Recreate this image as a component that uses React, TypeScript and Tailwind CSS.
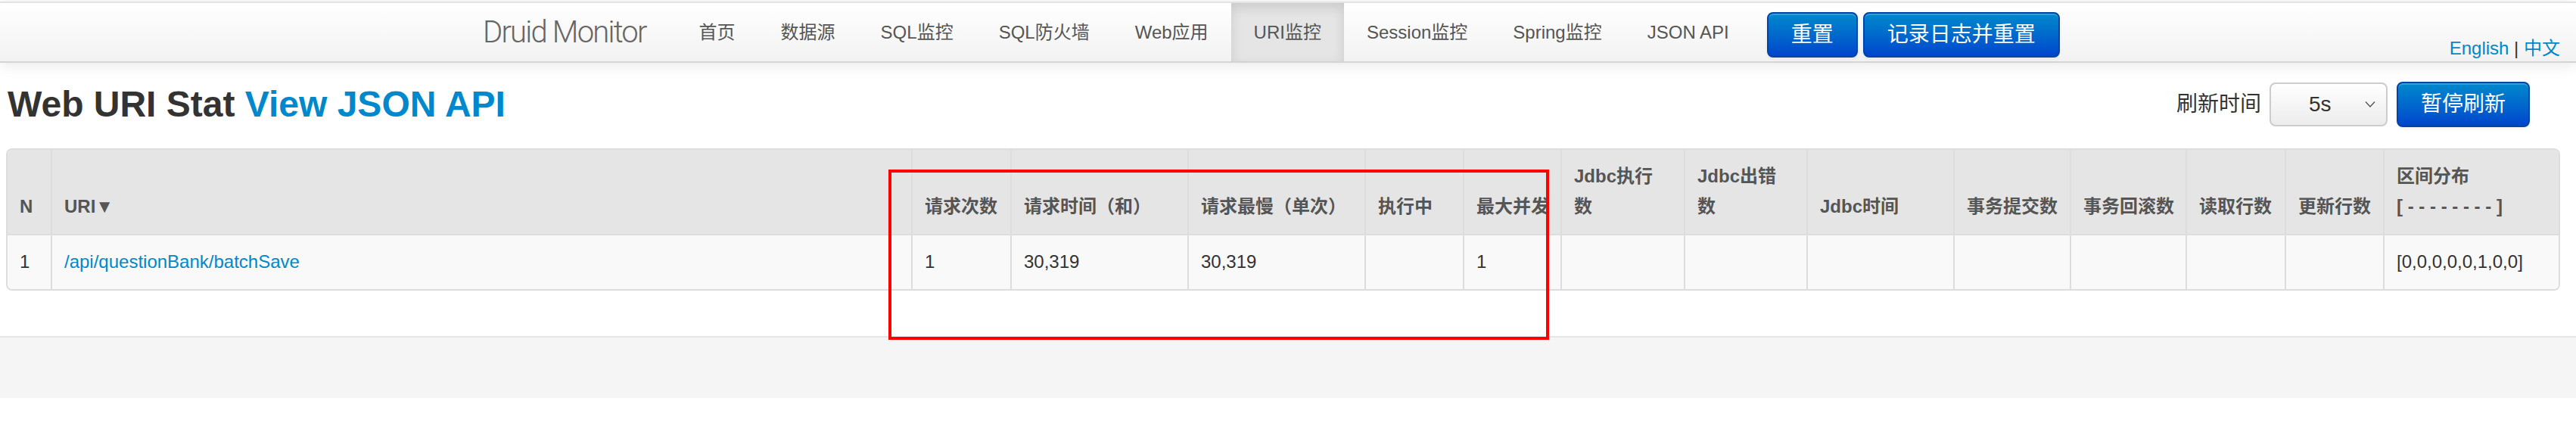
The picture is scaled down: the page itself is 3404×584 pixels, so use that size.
import React from 'react';

const FONT = '"Liberation Sans", "Noto Sans CJK SC", Arial, sans-serif';

const navItems = ['首页', '数据源', 'SQL监控', 'SQL防火墙', 'Web应用', 'URI监控', 'Session监控', 'Spring监控', 'JSON API'];

// column widths measured off the reference (outer border excluded)
const colWidths = [57, 1137, 131, 234, 234, 130, 129, 163, 162, 194, 154, 153, 131, 130, 232];

const headers: React.ReactNode[] = [
  'N',
  'URI▼',
  '请求次数',
  '请求时间（和）',
  '请求最慢（单次）',
  '执行中',
  '最大并发',
  <>Jdbc执行<br />数</>,
  <>Jdbc出错<br />数</>,
  'Jdbc时间',
  '事务提交数',
  '事务回滚数',
  '读取行数',
  '更新行数',
  <>区间分布<br />[ - - - - - - - - ]</>,
];

const row: React.ReactNode[] = [
  '1',
  <a href="#" className="text-[#0088cc]">/api/questionBank/batchSave</a>,
  '1',
  '30,319',
  '30,319',
  '',
  '1',
  '',
  '',
  '',
  '',
  '',
  '',
  '',
  '[0,0,0,0,0,1,0,0]',
];

function BlueButton({ children, className = '' }: { children: React.ReactNode; className?: string }) {
  return (
    <button
      type="button"
      className={`h-[60px] rounded-[8px] border-2 border-[#0044aa] bg-gradient-to-b from-[#0088cc] to-[#0044cc] px-[30px] text-[28px] leading-[40px] text-white shadow-[inset_0_2px_0_rgba(255,255,255,0.2),0_2px_4px_rgba(0,0,0,0.05)] ${className}`}
    >
      {children}
    </button>
  );
}

export default function App() {
  return (
    <div
      className="relative h-[584px] w-[3404px] overflow-hidden bg-white pt-[2px] text-[#333]"
      style={{ fontFamily: FONT }}
    >
      {/* navbar */}
      <div className="border-y-2 border-t-[#e3e3e3] border-b-[#d4d4d4] bg-gradient-to-b from-white to-[#f2f2f2] shadow-[0_2px_20px_rgba(0,0,0,0.1)]">
        <div className="flex h-[77px] items-stretch pl-[598px] pr-[21px]">
          <div
            className="flex items-center px-[40px] text-[40px] font-light tracking-[-1.8px] text-[#666]"
            style={{ fontFamily: 'Roboto, "Liberation Sans", sans-serif' }}
          >
            Druid Monitor
          </div>
          {navItems.map((item) => (
            <a
              key={item}
              href="#"
              className={`flex items-center px-[30px] text-[24px] whitespace-nowrap text-[#555] ${
                item === 'URI监控' ? 'bg-[#e5e5e5] shadow-[inset_0_6px_16px_rgba(0,0,0,0.12)]' : ''
              }`}
            >
              {item}
            </a>
          ))}
          <div className="ml-[20px] mt-[12px] flex gap-[7px] self-start">
            <BlueButton>重置</BlueButton>
            <BlueButton>记录日志并重置</BlueButton>
          </div>
          <div className="mb-[3px] ml-auto self-end text-[24px] leading-[28px]">
            <a href="#" className="text-[#0088cc]">English</a>
            <span className="text-[#333]"> | </span>
            <a href="#" className="text-[#0088cc]">中文</a>
          </div>
        </div>
      </div>

      <div className="pl-[8px] pr-[21px]">
        {/* title row */}
        <div className="mt-[15px] flex items-center justify-between">
          <h3 className="ml-[2px] text-[48px] font-bold leading-[80px] text-[#333]">
            Web URI Stat <a href="#" className="text-[#0088cc]">View JSON API</a>
          </h3>
          <div className="mr-[40px] flex items-center">
            <span className="mr-[11px] text-[28px]">刷新时间</span>
            <div className="flex h-[58px] w-[156px] items-center rounded-[8px] border-2 border-[#cccccc] bg-gradient-to-b from-white to-[#ececec] pl-[50px] pr-[14px] text-[28px]">
              <span className="flex-1">5s</span>
              <svg width="14" height="10" viewBox="0 0 14 10" className="text-[#555]">
                <path d="M1 1.5 L7 8 L13 1.5" fill="none" stroke="currentColor" strokeWidth="1.4" />
              </svg>
            </div>
            <BlueButton className="ml-[12px] h-[59px] px-[28px]">暂停刷新</BlueButton>
          </div>
        </div>

        {/* table */}
        <div className="mt-[18px] overflow-hidden rounded-[8px] border-2 border-[#dddddd]">
          <table className="w-full table-fixed border-separate border-spacing-0 text-[24px] leading-[40px]">
            <colgroup>
              {colWidths.map((w, i) => (
                <col key={i} style={{ width: w }} />
              ))}
            </colgroup>
            <thead>
              <tr className="bg-[#e5e5e5]">
                {headers.map((h, i) => (
                  <th
                    key={i}
                    className={`h-[113px] border-b-2 border-[#dddddd] px-[16px] pt-[15px] pb-[16px] text-left align-bottom font-bold whitespace-nowrap text-[#555] ${
                      i === 0 ? '' : 'border-l-2'
                    }`}
                  >
                    {h}
                  </th>
                ))}
              </tr>
            </thead>
            <tbody>
              <tr className="bg-[#f9f9f9]">
                {row.map((c, i) => (
                  <td
                    key={i}
                    className={`h-[71px] border-[#dddddd] px-[16px] pt-[15px] pb-[16px] text-left whitespace-nowrap text-[#333] ${
                      i === 0 ? '' : 'border-l-2'
                    }`}
                  >
                    {c}
                  </td>
                ))}
              </tr>
            </tbody>
          </table>
        </div>
      </div>

      {/* footer */}
      <div className="mt-[60px] h-[82px] border-t-2 border-[#e5e5e5] bg-[#f5f5f5]" />

      {/* red annotation box */}
      <div className="pointer-events-none absolute left-[1174px] top-[224px] h-[225px] w-[873px] border-4 border-[#ff0000]" />
    </div>
  );
}
